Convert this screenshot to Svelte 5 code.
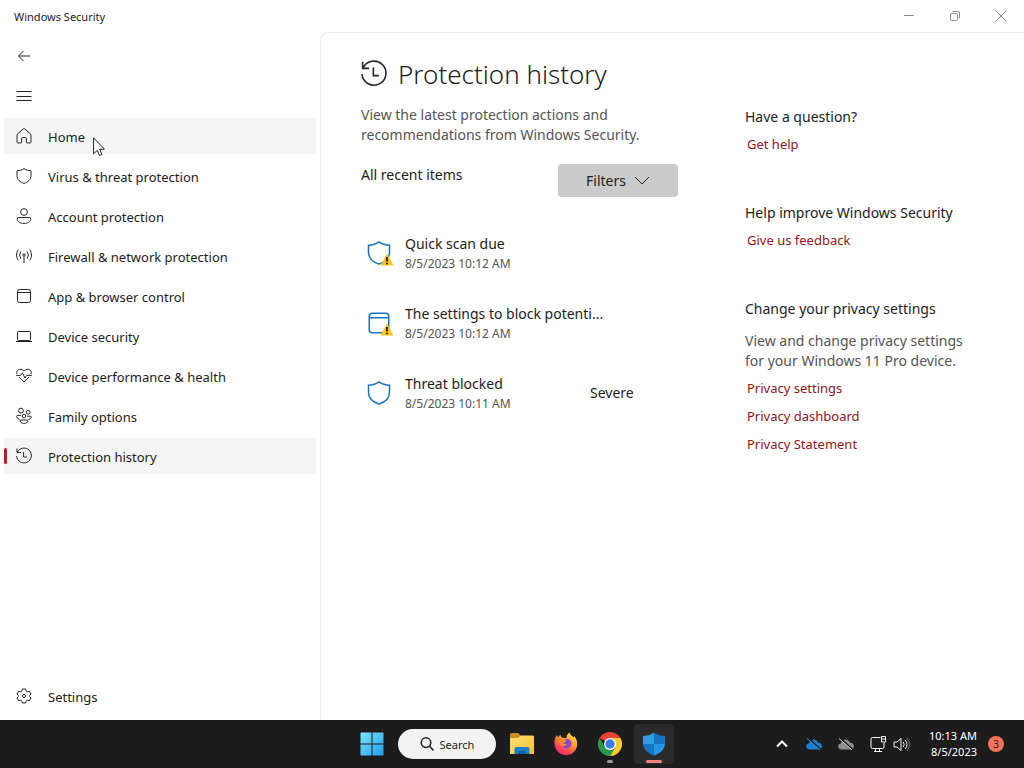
<script>
  let active = $state('Protection history');

  const navItems = [
    { label: 'Home', icon: 'home' },
    { label: 'Virus & threat protection', icon: 'shield' },
    { label: 'Account protection', icon: 'account' },
    { label: 'Firewall & network protection', icon: 'network' },
    { label: 'App & browser control', icon: 'app' },
    { label: 'Device security', icon: 'device' },
    { label: 'Device performance & health', icon: 'health' },
    { label: 'Family options', icon: 'family' },
    { label: 'Protection history', icon: 'history' }
  ];

  const history = [
    { title: 'Quick scan due', time: '8/5/2023 10:12 AM', icon: 'shield', warning: true },
    { title: 'The settings to block potenti...', time: '8/5/2023 10:12 AM', icon: 'app', warning: true },
    { title: 'Threat blocked', time: '8/5/2023 10:11 AM', icon: 'shield', severity: 'Severe' }
  ];
</script>

{#snippet icon(name)}
  <svg class="icon" viewBox="0 0 16 16" width="16" height="16" aria-hidden="true">
    {#if name === 'home'}
      <path d="M1 6.6 7.2.9Q8 .2 8.8.9L15 6.6V14q0 1-1 1h-2.6q-1 0-1-1v-3.6q0-.8-.8-.8H6.4q-.8 0-.8.8V14q0 1-1 1H2q-1 0-1-1Z" />
    {:else if name === 'shield'}
      <path d="M8 .6Q11 2.8 15 2.8V7.5C15 11.5 12.2 14 8 15.4 3.8 14 1 11.5 1 7.5V2.8Q5 2.8 8 .6Z" />
    {:else if name === 'account'}
      <circle cx="8" cy="4" r="3.4" />
      <path d="M2.5 9.5h11q1.3 0 1.3 1.3C14.8 13.6 12 15.4 8 15.4S1.2 13.6 1.2 10.8q0-1.3 1.3-1.3Z" />
    {:else if name === 'network'}
      <circle cx="8" cy="7" r="1.2" />
      <path d="M8 8.2V15M4.8 10.6Q2.4 7 4.8 3.4M11.2 10.6Q13.6 7 11.2 3.4M2.2 12.4Q-1.2 7 2.2 1.6M13.8 12.4Q17.2 7 13.8 1.6" />
    {:else if name === 'app'}
      <rect x="1.5" y="1.5" width="13" height="13" rx="2" />
      <path d="M1.5 4.5h13" />
    {:else if name === 'device'}
      <rect x="1.5" y="3.5" width="13" height="9" rx="1.2" />
      <path d="M0 13.5h16" />
    {:else if name === 'health'}
      <path d="M1 6C-.4 2 4 -.6 8 3 12-.6 16.4 2 15 6M3 9l5 5 5-5M.2 7.4h4.4l1.8-2.6 2.6 5.2 1.7-2.6h5.100" />
    {:else if name === 'family'}
      <circle cx="5" cy="2.6" r="2.4" />
      <circle cx="12.1" cy="4.2" r="1.9" />
      <circle cx="8" cy="8" r="1.8" />
      <path d="M5 7.4H1.8Q.6 7.4.6 8.6.8 11 3.600 11.400M11 8.200h3.200q1.200 0 1.200 1-.2 2-3 2.200M4.500 12h7c1 2-1.300 3.500-3.500 3.500S3.500 14 4.500 12Z" />
    {:else if name === 'history'}
      <path d="M1 .5v4h4M1.3 4.3A7.4 7.4 0 1 1 .6 8M7.6 4v5h3.4" />
    {:else if name === 'settings'}
      <path d="M6.4 1h3.2l.5 2 1.3.8 2-.6 1.6 2.8L13.6 7.4v1.3L15 10l-1.6 2.8-2-.5-1.3.8-.5 1.9H6.4l-.5-1.9-1.3-.8-2 .5L1 10l1.4-1.3V7.4L1 6l1.6-2.8 2 .6L5.9 3Z" stroke-linejoin="round" />
      <circle cx="8" cy="8" r="1.6" />
    {/if}
  </svg>
{/snippet}

<div class="screen">
  <header class="titlebar">
    <span>Windows Security</span>
    <div class="window-buttons">
      <button aria-label="Minimize">
        <svg viewBox="0 0 10 10" width="10" height="10"><path d="M0 4.5h10" /></svg>
      </button>
      <button aria-label="Restore">
        <svg viewBox="0 0 10 10" width="10" height="10"><rect x=".5" y="2.5" width="7" height="7" rx="1" /><path d="M2.5.5H8q1.5 0 1.5 1.5v5.5" /></svg>
      </button>
      <button aria-label="Close">
        <svg viewBox="0 0 10 10" width="10" height="10"><path d="m0 0 10 10M10 0 0 10" /></svg>
      </button>
    </div>
  </header>

  <div class="window">
    <nav class="sidebar">
      <button class="nav-item" aria-label="Back">
        <svg class="icon" viewBox="0 0 16 16" width="16" height="16"><path d="M14 8H2.5M7.5 3l-5 5 5 5" /></svg>
      </button>
      <button class="nav-item" aria-label="Menu">
        <svg class="icon" viewBox="0 0 16 16" width="16" height="16"><path d="M.5 3.5h15M.5 8.5h15M.5 12.5h15" /></svg>
      </button>

      {#each navItems as item}
        <button
          class="nav-item"
          class:active={active === item.label}
          class:hovered={item.label === 'Home'}
          onclick={() => (active = item.label)}
        >
          {@render icon(item.icon)}
          <span>{item.label}</span>
          {#if item.label === 'Home'}
            <svg class="cursor" viewBox="0 0 12 20" width="12" height="20" aria-hidden="true">
              <path d="M.6.8v16l3.7-3.5 2.2 5.2 2.4-1L6.7 12.2h4.7Z" />
            </svg>
          {/if}
        </button>
      {/each}

      <button class="nav-item settings">
        {@render icon('settings')}
        <span>Settings</span>
      </button>
    </nav>

    <main class="content">
      <section class="history">
        <h1>
          {@render icon('history')}
          Protection history
        </h1>
        <p class="intro">View the latest protection actions and recommendations from Windows Security.</p>

        <div class="toolbar">
          <span>All recent items</span>
          <button class="filters">
            Filters
            <svg viewBox="0 0 16 10" width="16" height="10" aria-hidden="true"><path d="m1 1 7 7 7-7" /></svg>
          </button>
        </div>

        <ul>
          {#each history as entry}
            <li>
              <div class="entry-icon">
                {@render icon(entry.icon)}
                {#if entry.warning}
                  <svg class="warning" viewBox="0 0 14 13" width="14" height="13" aria-hidden="true">
                    <path class="triangle" d="M7 .5 13.5 12.5H.5Z" />
                    <path class="mark" d="M7 4v4.5M7 9.7v1.6" />
                  </svg>
                {/if}
              </div>
              <div class="entry-text">
                <div>{entry.title}</div>
                <div class="time">{entry.time}</div>
              </div>
              {#if entry.severity}
                <div class="severity">{entry.severity}</div>
              {/if}
            </li>
          {/each}
        </ul>
      </section>

      <aside>
        <section>
          <h2>Have a question?</h2>
          <a href="#help">Get help</a>
        </section>
        <section>
          <h2>Help improve Windows Security</h2>
          <a href="#feedback">Give us feedback</a>
        </section>
        <section>
          <h2>Change your privacy settings</h2>
          <p>View and change privacy settings for your Windows 11 Pro device.</p>
          <a href="#privacy-settings">Privacy settings</a>
          <a href="#privacy-dashboard">Privacy dashboard</a>
          <a href="#privacy-statement">Privacy Statement</a>
        </section>
      </aside>
    </main>
  </div>

  <footer class="taskbar">
    <div class="apps">
      <button class="app" aria-label="Start">
        <svg viewBox="0 0 24 24" width="24" height="24">
          <defs>
            <linearGradient id="start" x1="0" y1="0" x2="1" y2="1">
              <stop offset="0" stop-color="#7fe3fc" />
              <stop offset="1" stop-color="#1c9ff0" />
            </linearGradient>
          </defs>
          <path fill="url(#start)" d="M1 .5h10.500V11.500H.5V1Zm11.500 0H23l.5.5v10.500h-11ZM.5 12.500h11v11H1L.5 23Zm12 0h11V23l-.5.5H12.500Z" />
        </svg>
      </button>
      <button class="search">
        <svg viewBox="0 0 14 14" width="14" height="14" aria-hidden="true"><circle cx="6" cy="5.6" r="4.8" /><path d="m9.5 9.2 4 4.2" /></svg>
        <span>Search</span>
      </button>
      <button class="app" aria-label="File Explorer">
        <svg viewBox="0 0 24 24" width="24" height="24">
          <defs>
            <linearGradient id="folder" x1="0" y1="0" x2="1" y2="1">
              <stop offset="0" stop-color="#ffe07a" />
              <stop offset="1" stop-color="#f8c030" />
            </linearGradient>
          </defs>
          <path fill="#c98e1b" d="M0 2.5Q0 1 1.5 1H8l2.5 2.5V8H0Z" />
          <path fill="url(#folder)" d="M0 6h8l2.5-2.5H22.5Q24 3.5 24 5v17H0Z" />
          <path fill="#1980cb" d="M4.5 22v-5q0-2 2-2h11q2 0 2 2v5Z" />
          <path fill="#0c62a7" d="M8 19h8v3H8Z" />
        </svg>
      </button>
      <button class="app" aria-label="Firefox">
        <svg viewBox="0 0 24 24" width="24" height="24">
          <defs>
            <linearGradient id="fox" x1=".8" y1="0" x2=".2" y2="1">
              <stop offset="0" stop-color="#ffe84a" />
              <stop offset=".4" stop-color="#ff9428" />
              <stop offset=".75" stop-color="#ff405b" />
              <stop offset="1" stop-color="#e82080" />
            </linearGradient>
          </defs>
          <path fill="url(#fox)" d="M3 3q.3 1.6 1.5 2.4Q5 3.5 6.5 3q.2 2 2.2 2.7l3.6.3q.4-3.700 3-5.500 1 3 4.200 4.800l.6-1.300C24 8 24 14 21.500 18 17 25 6.500 24.800 2.500 18-.5 13-.2 6.500 3 3Z" />
          <circle cx="12.5" cy="11.5" r="4.8" fill="#8445dc" />
          <path fill="#ff8a2c" d="M4 9q4-3.5 8.5-1l-1 2-3 1.2q2 1.3 4.5.3c-1 3-4.5 3.7-6.5 1.500Z" />
        </svg>
      </button>
      <button class="app" aria-label="Chrome">
        <svg viewBox="0 0 24 24" width="24" height="24">
          <path fill="#e64435" d="M12 12 1.6 6A12 12 0 0 1 22.4 6Z" />
          <path fill="#fbcb2d" d="M12 12V6h10.4A12 12 0 0 1 12 24l5.2-9Z" />
          <path fill="#279b4a" d="M1.6 6A12 12 0 0 0 12 24l5.2-9L12 12l-5.2 3Z" />
          <circle cx="12" cy="12" r="6" fill="#fff" />
          <circle cx="12" cy="12" r="4.7" fill="#347de4" />
        </svg>
        <span class="running"></span>
      </button>
      <button class="app open" aria-label="Windows Security">
        <svg viewBox="0 0 24 24" width="24" height="24">
          <path fill="#2b9fe4" d="M12 .5V12H1V4Q7 4 12 .5Z" />
          <path fill="#1673c4" d="M12 .5Q17 4 23 4v8H12Z" />
          <path fill="#1673c4" d="M1 12h11v11.500C5.500 21 1.400 17.500 1 12Z" />
          <path fill="#2196e4" d="M12 12h11c-.4 5.500-4.500 9-11 11.500Z" />
        </svg>
        <span class="running"></span>
      </button>
    </div>

    <div class="tray">
      <svg class="line chevron" viewBox="0 0 16 16" width="16" height="16"><path d="m3 10.5 5-5 5 5" /></svg>
      <svg viewBox="0 0 16 16" width="16" height="16">
        <path fill="#1b80d4" d="M3.5 13.5C-.8 13.5-.8 7.500 3 7.500 4 2.500 10 2 12 6.500c5.500.5 5 7 .5 7Z" />
        <path class="slash-gap" d="m3 3 12 11" /><path class="slash blue" d="m1 2.500 13 11.500" />
      </svg>
      <svg viewBox="0 0 16 16" width="16" height="16">
        <path fill="#8d8d8d" d="M3.5 13.5C-.8 13.5-.8 7.500 3 7.500 4 2.500 10 2 12 6.500c5.500.5 5 7 .5 7Z" />
        <path class="slash-gap" d="m3 3 12 11" /><path class="slash" d="m1 2.500 13 11.500" />
      </svg>
      <div class="status">
        <svg class="line" viewBox="0 0 17 17" width="17" height="17"><path d="M10.5 1.500h-8q-1.500 0-1.500 1.500v8q0 1.500 1.500 1.500h10q1.500 0 1.500-1.500V6.500M5.500 12.500v3M9.500 12.500v3M4 15.500h8M11.500.5h4V6h-4ZM11.500 3h4" /></svg>
        <svg class="line" viewBox="0 0 17 17" width="17" height="17"><path d="M1 6v5h3l4 3.500v-12L4 6ZM10.200 6q2 2.500 0 5M12.200 4q3.500 4.500 0 9" /><path opacity=".4" d="M14.200 2q4.500 6.500 0 13" /></svg>
      </div>
      <div class="clock">
        <div>10:13 AM</div>
        <div>8/5/2023</div>
      </div>
      <span class="badge">3</span>
    </div>
  </footer>
</div>

<style>
  :global(body) {
    margin: 0;
    background: #fefefe;
  }

  .screen {
    min-height: 100vh;
    display: flex;
    flex-direction: column;
    font-family: "Noto Sans", "Open Sans", sans-serif;
    font-size: 14px;
    line-height: 20px;
    color: #1d1d1d;
  }

  button {
    font: inherit;
    color: inherit;
    background: none;
    border: none;
    padding: 0;
  }

  svg {
    flex: none;
    fill: none;
  }

  .icon {
    stroke: #262626;
    stroke-width: 1;
    overflow: visible;
  }

  .titlebar {
    display: flex;
    justify-content: space-between;
    align-items: center;
    height: 32px;
    padding-left: 14px;
    font-size: 11px;
  }

  .titlebar span,
  .nav-item span,
  .search span {
    padding-top: 2px;
  }

  .window-buttons {
    display: flex;
  }

  .window-buttons button {
    display: flex;
    align-items: center;
    justify-content: center;
    width: 46px;
    height: 32px;
  }

  .window-buttons svg {
    stroke: #8a8a8a;
    overflow: visible;
  }

  .window {
    flex: 1;
    display: flex;
  }

  .sidebar {
    flex: none;
    width: 320px;
    box-sizing: border-box;
    display: flex;
    flex-direction: column;
    gap: 4px;
    padding: 6px 4px;
  }

  .nav-item {
    position: relative;
    display: flex;
    align-items: center;
    gap: 16px;
    height: 36px;
    padding: 0 12px;
    border-radius: 4px;
    font-size: 13px;
    text-align: left;
  }

  .nav-item.hovered,
  .nav-item.active {
    background: #f5f5f5;
  }

  .nav-item.active::before {
    content: "";
    position: absolute;
    left: 0;
    top: 10px;
    width: 3px;
    height: 16px;
    border-radius: 2px;
    background: #ae1e2b;
  }

  .settings {
    margin-top: auto;
  }

  .cursor {
    position: absolute;
    left: 89px;
    top: 19px;
    fill: #fff;
    stroke: #222;
  }

  .content {
    flex: 1;
    display: flex;
    gap: 67px;
    padding: 24px 40px;
    border: solid #ececec;
    border-width: 1px 0 0 1px;
    border-top-left-radius: 8px;
  }

  .history {
    width: 317px;
  }

  h1 {
    display: flex;
    align-items: center;
    gap: 11px;
    margin: 0;
    font-size: 26px;
    font-weight: 300;
    line-height: 34px;
    white-space: nowrap;
  }

  h1 .icon {
    width: 26px;
    height: 26px;
  }

  p {
    margin: 0;
    color: #555;
  }

  .intro {
    margin-top: 14px;
  }

  .toolbar {
    display: flex;
    justify-content: space-between;
    margin-top: 19px;
  }

  .toolbar > span {
    line-height: 22px;
  }

  .filters {
    display: flex;
    align-items: center;
    justify-content: center;
    gap: 8px;
    width: 120px;
    height: 33px;
    border-radius: 4px;
    background: #cbcbcb;
  }

  .filters svg {
    stroke: #222;
  }

  ul {
    list-style: none;
    margin: 21px 0 0;
    padding: 0;
  }

  li {
    display: flex;
    align-items: center;
    height: 70px;
    padding-left: 6px;
  }

  .entry-icon {
    position: relative;
    display: flex;
    margin-right: 13px;
  }

  .entry-icon .icon {
    width: 24px;
    height: 24px;
    padding-right: 1px;
    stroke: #1874c0;
  }

  .warning {
    position: absolute;
    right: -2px;
    bottom: -1px;
  }

  .triangle {
    fill: #fcc51c;
  }

  .mark {
    stroke: #3a2c0c;
    stroke-width: 2;
  }

  .entry-text {
    flex: 1;
    padding-top: 2px;
    white-space: nowrap;
  }

  .time {
    font-size: 12px;
    color: #555;
  }

  .severity {
    width: 88px;
  }

  aside {
    flex: 1;
    max-width: 226px;
    padding-top: 50px;
  }

  aside section {
    margin-bottom: 45px;
  }

  h2 {
    margin: 0 0 3px;
    font-size: 14px;
    font-weight: 400;
    line-height: 20px;
    white-space: nowrap;
  }

  aside p {
    margin: 12px 0 3px;
  }

  a {
    display: block;
    padding-left: 2px;
    font-size: 13px;
    line-height: 28px;
    color: #8f1622;
    text-decoration: none;
  }

  .taskbar {
    display: grid;
    grid-template-columns: 1fr auto 1fr;
    align-items: center;
    height: 48px;
    background: #1c1c1c;
    color: #fff;
  }

  .apps {
    grid-column: 2;
    display: flex;
    align-items: center;
    gap: 4px;
    padding-left: 2px;
  }

  .app {
    position: relative;
    display: flex;
    align-items: center;
    justify-content: center;
    width: 40px;
    height: 40px;
    border-radius: 4px;
  }

  .app.open {
    background: #2b2b2b;
  }

  .running {
    position: absolute;
    left: 50%;
    bottom: 1px;
    width: 6px;
    height: 3px;
    border-radius: 2px;
    background: #999;
    transform: translateX(-50%);
  }

  .open .running {
    width: 16px;
    background: #f3837a;
  }

  .search {
    display: flex;
    align-items: center;
    justify-content: center;
    gap: 6px;
    width: 98px;
    height: 30px;
    margin: 0 2px;
    border-radius: 15px;
    background: #f3f3f3;
    color: #222;
    font-size: 11px;
  }

  .search svg {
    stroke: #222;
    stroke-width: 1.5;
  }

  .tray {
    display: flex;
    align-items: center;
    justify-content: flex-end;
    gap: 16px;
    padding-right: 20px;
    font-size: 11px;
  }

  .line {
    stroke: #f5f5f5;
  }

  .chevron {
    stroke-width: 2;
  }

  .slash-gap {
    stroke: #1c1c1c;
    stroke-width: 2;
  }

  .slash {
    stroke: #d5d5d5;
  }

  .slash.blue {
    stroke: #3aa0ee;
  }

  .status {
    display: flex;
    gap: 6px;
    margin-right: 3px;
  }

  .clock {
    text-align: right;
    line-height: 16px;
  }

  .badge {
    width: 16px;
    height: 16px;
    margin-left: -5px;
    border-radius: 50%;
    background: #f3735a;
    color: #3a1510;
    font-size: 10px;
    line-height: 16px;
    text-align: center;
  }
</style>
